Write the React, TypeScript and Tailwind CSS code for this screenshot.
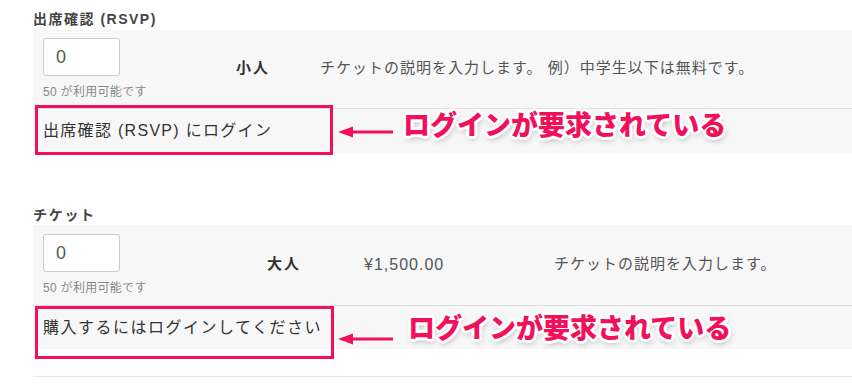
const FONT = "font-['Liberation_Sans','Noto_Sans_CJK_JP',sans-serif]";
const PINK = "#f2105a";

const OUTLINE =
  "[text-shadow:2px_0_0_#fff,-2px_0_0_#fff,0_2px_0_#fff,0_-2px_0_#fff,2px_2px_0_#fff,-2px_-2px_0_#fff,2px_-2px_0_#fff,-2px_2px_0_#fff,3px_0_0_#fff,-3px_0_0_#fff,0_3px_0_#fff,0_-3px_0_#fff,1px_3px_6px_rgba(0,0,0,0.35)]";

function Arrow({ top }: { top: number }) {
  return (
    <svg
      className="absolute left-[305px]"
      style={{ top }}
      width="56"
      height="12"
      viewBox="0 0 56 12"
    >
      <polygon points="0,6 15,0.5 15,11.5" fill={PINK} />
      <line x1="12" y1="6" x2="55" y2="6" stroke={PINK} strokeWidth="3.2" />
    </svg>
  );
}

function Note({ left, top }: { left: number; top: number }) {
  return (
    <span
      className={`absolute whitespace-nowrap text-[27px] leading-none font-black text-[#f2105a] ${OUTLINE}`}
      style={{ left, top }}
    >
      ログインが要求されている
    </span>
  );
}

function Qty() {
  return (
    <div className="flex flex-col pl-[10px]">
      <div className="w-[77px] h-[38px] bg-white border border-[#cccccc] rounded-[3px] flex items-center pl-[12px] text-[18px] text-[#555]">
        0
      </div>
      <span className="mt-[9px] text-[12px] leading-[14px] text-[#888] tracking-[0.3px]">
        50 が利用可能です
      </span>
    </div>
  );
}

export default function App() {
  return (
    <div className={`min-h-screen bg-white pl-[33px] pt-[9px] ${FONT}`}>
      {/* 出席確認 */}
      <h3 className="h-[21px] text-[14px] leading-[20px] font-bold text-[#444] tracking-[1.5px]">
        出席確認 (RSVP)
      </h3>
      <div className="relative bg-[#f7f7f7]">
        <div className="flex items-center pt-[8px] pb-[9px] border-b border-[#e0e0e0]">
          <div className="w-[203px]">
            <Qty />
          </div>
          <span className="w-[84px] text-[15px] font-bold text-[#333] tracking-[2px]">小人</span>
          <span className="text-[15px] text-[#555] tracking-[1px]">
            チケットの説明を入力します。 例）中学生以下は無料です。
          </span>
        </div>
        <div className="h-[44px] flex items-center pl-[10px] text-[16px] text-[#333] tracking-[1.3px]">
          出席確認 (RSVP) にログイン
        </div>
        <div className="absolute left-[2px] top-[75px] w-[298px] h-[50px] border-[3px] border-[#f2105a]" />
        <Arrow top={96} />
        <Note left={370} top={83} />
      </div>

      {/* チケット */}
      <h3 className="mt-[52px] h-[20px] text-[14px] leading-[20px] font-bold text-[#444] tracking-[1.7px]">
        チケット
      </h3>
      <div className="relative bg-[#f7f7f7]">
        <div className="flex items-center pt-[9px] pb-[10px] border-b border-[#e0e0e0]">
          <div className="w-[234px]">
            <Qty />
          </div>
          <span className="w-[97px] text-[15px] font-bold text-[#333] tracking-[2px]">大人</span>
          <span className="w-[190px] text-[16px] text-[#555] tracking-[1px]">¥1,500.00</span>
          <span className="text-[15px] text-[#555] tracking-[1px]">チケットの説明を入力します。</span>
        </div>
        <div className="h-[43px] flex items-center pl-[10px] text-[16px] text-[#333] tracking-[1.5px]">
          購入するにはログインしてください
        </div>
        <div className="absolute left-[2px] top-[81px] w-[299px] h-[53px] border-[3px] border-[#f2105a]" />
        <Arrow top={108} />
        <Note left={375} top={91} />
      </div>
      <div className="mt-[27px] h-px bg-[#e8e8e8]" />
    </div>
  );
}
